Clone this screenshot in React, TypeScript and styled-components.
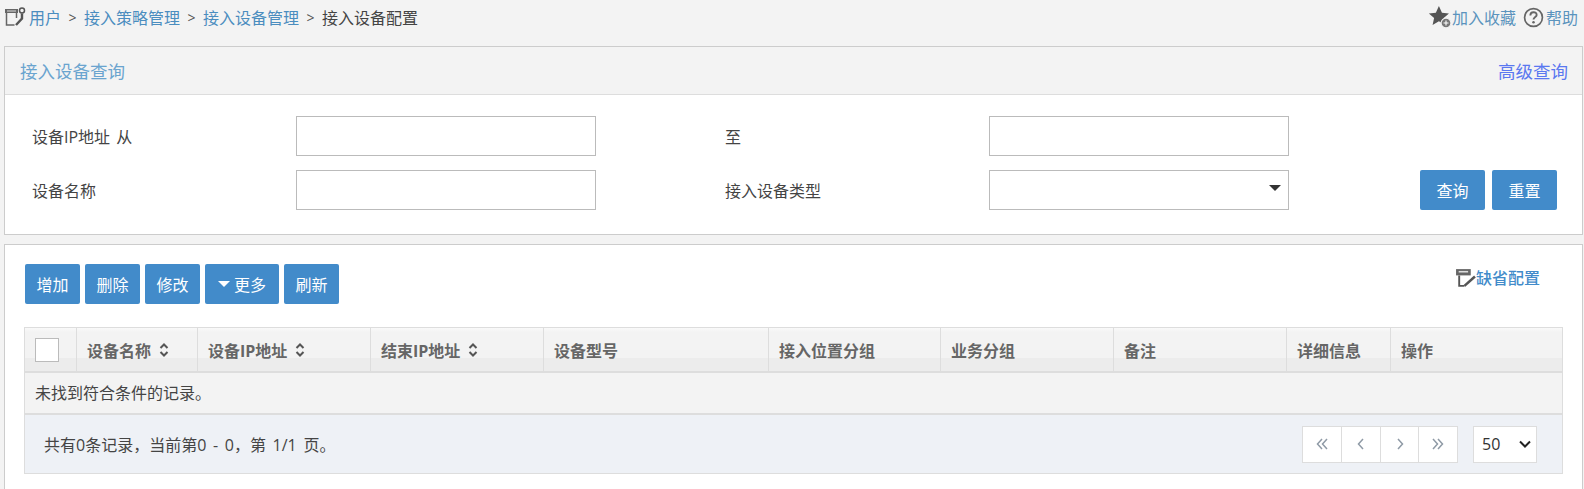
import React from 'react';
import styled, { createGlobalStyle } from 'styled-components';

const GlobalStyle = createGlobalStyle`
   html, body {
      margin: 0;
      padding: 0;
      height: 489px;
      overflow: hidden;
      background: #f3f3f3;
      font-family: "Open Sans", "Noto Sans CJK SC", sans-serif;
      font-size: 16px;
      color: #444;
   }
   * {
      box-sizing: border-box;
   }
`;

const blue = '#428bca';

const TopBar = styled.div`
   height: 46px;
   padding: 0 6px 0 4px;
   display: flex;
   justify-content: space-between;
   align-items: flex-start;
`;

const Crumbs = styled.div`
   display: flex;
   align-items: center;
   height: 34px;
   gap: 7px;
`;

const CrumbIcon = styled.svg`
   width: 22px;
   height: 22px;
   margin-right: -4px;
`;

const CrumbLink = styled.span`
   color: #4b8dbf;
`;

const Sep = styled.span`
   width: 9px;
   text-align: center;
   color: #555;
   font-size: 14px;
`;

const TopActions = styled.div`
   display: flex;
   align-items: center;
   height: 34px;
`;

const TopLink = styled.span`
   color: #5b93bd;
   margin-right: 7px;
   &:last-child {
      margin-right: 0;
   }
`;

const StarIcon = styled.svg`
   width: 24px;
   height: 24px;
`;

const HelpIcon = styled.svg`
   width: 21px;
   height: 21px;
   margin-right: 2px;
`;

const Panel = styled.section`
   margin: 0 1px 0 4px;
   background: #fff;
   border: 1px solid #ccc;
`;

const SearchPanel = styled(Panel)`
   height: 189px;
   margin-bottom: 9px;
`;

const PanelHead = styled.div`
   height: 48px;
   padding: 0 14px 0 15px;
   background: #f3f3f3;
   border-bottom: 1px solid #ddd;
   display: flex;
   justify-content: space-between;
   align-items: center;
   font-size: 17.5px;
`;

const PanelTitle = styled.span`
   color: #6aa4cf;
`;

const AdvancedLink = styled.span`
   color: #5a78f0;
`;

const SearchForm = styled.div`
   display: grid;
   grid-template-columns: 264px 300px 393px 300px 1fr;
   grid-auto-rows: 40px;
   row-gap: 14px;
   padding: 21px 0 0 27px;
   align-items: center;
`;

const FieldLabel = styled.label<{ $indent?: boolean }>`
   color: #444;
   word-spacing: 2px;
   padding-left: ${p => (p.$indent ? '129px' : '0')};
`;

const TextBox = styled.div`
   height: 40px;
   background: #fff;
   border: 1px solid #bbb;
   position: relative;
`;

const Caret = styled.span`
   position: absolute;
   right: 7px;
   top: 14px;
   border-left: 6px solid transparent;
   border-right: 6px solid transparent;
   border-top: 6px solid #333;
`;

const QueryButtons = styled.div`
   display: flex;
   gap: 7px;
   padding-left: 131px;
`;

const Button = styled.button<{ $w: number }>`
   width: ${p => p.$w}px;
   height: 40px;
   padding: 0;
   border: 0;
   border-radius: 2px;
   background: ${blue};
   color: #fff;
   font: inherit;
   display: flex;
   align-items: center;
   justify-content: center;
   gap: 4px;
`;

const ListPanel = styled(Panel)`
   height: 260px;
   padding: 19px 19px 0 19px;
`;

const Toolbar = styled.div`
   height: 40px;
   margin-bottom: 23px;
   padding-left: 1px;
   display: flex;
   gap: 5px;
`;

const DefaultConfig = styled.div`
   margin-left: auto;
   margin-right: 23px;
   margin-top: 1px;
   height: 24px;
   display: flex;
   align-items: center;
   color: ${blue};
   font-weight: 500;
`;

const ConfigIcon = styled.svg`
   width: 21px;
   height: 21px;
`;

const MoreCaret = styled.span`
   border-left: 6px solid transparent;
   border-right: 6px solid transparent;
   border-top: 6px solid #fff;
`;

const Table = styled.div`
   border: 1px solid #ddd;
`;

const HeadRow = styled.div`
   display: grid;
   grid-template-columns: 52px 121px 173px 173px 225px 172px 173px 173px 104px 1fr;
   height: 45px;
   background: linear-gradient(#f9f9f9 0, #f3f3f3 4px, #f3f3f3 30px, #ececec 30px);
   border-bottom: 2px solid #ddd;
`;

const HeadCell = styled.div`
   display: flex;
   align-items: center;
   padding-left: 10px;
   border-right: 1px solid #ddd;
   color: #666;
   font-weight: 700;
   gap: 8px;
   &:last-child {
      border-right: 0;
   }
`;

const CheckBox = styled.div`
   width: 24px;
   height: 24px;
   background: #fff;
   border: 1px solid #bbb;
`;

const SortIcon = styled.svg`
   width: 10px;
   height: 14px;
`;

const EmptyRow = styled.div`
   height: 42px;
   padding: 0 0 2px 10px;
   display: flex;
   align-items: center;
   background: #f3f3f3;
   border-bottom: 2px solid #ddd;
   color: #444;
`;

const Footer = styled.div`
   height: 58px;
   padding: 0 25px 0 19px;
   display: flex;
   align-items: center;
   background: #eef1f6;
`;

const Summary = styled.span`
   color: #444;
   word-spacing: 2.5px;
   margin-right: auto;
`;

const Pager = styled.div`
   display: flex;
   background: #fff;
   border: 1px solid #ddd;
   height: 37px;
   margin-right: 15px;
`;

const PageButton = styled.div<{ $w: number }>`
   width: ${p => p.$w}px;
   display: flex;
   align-items: center;
   justify-content: center;
   border-right: 1px solid #ddd;
   &:last-child {
      border-right: 0;
   }
`;

const PageIcon = styled.svg`
   width: 14px;
   height: 14px;
   fill: none;
   stroke: #8f9aa6;
   stroke-width: 1.5;
`;

const SizeSelect = styled.div`
   width: 64px;
   height: 37px;
   padding: 0 5px 0 8px;
   background: #fff;
   border: 1px solid #ddd;
   display: flex;
   align-items: center;
   justify-content: space-between;
   color: #333;
`;

const ChevronIcon = styled.svg`
   width: 12px;
   height: 8px;
   fill: none;
   stroke: #222;
   stroke-width: 2;
`;

const Sort = () => (
   <SortIcon viewBox="0 0 10 14">
      <path d="M1.5 5 5 1.5 8.5 5M1.5 9 5 12.5 8.5 9" fill="none" stroke="#555" strokeWidth="2" />
   </SortIcon>
);

const columns = [
   { label: '设备名称', sort: true },
   { label: '设备IP地址', sort: true },
   { label: '结束IP地址', sort: true },
   { label: '设备型号' },
   { label: '接入位置分组' },
   { label: '业务分组' },
   { label: '备注' },
   { label: '详细信息' },
   { label: '操作' },
];

const pages = [
   { w: 39, d: 'M7 2 2.5 7 7 12M12 2 7.5 7 12 12' },
   { w: 39, d: 'M9 2 4.5 7 9 12' },
   { w: 38, d: 'M5 2 9.5 7 5 12' },
   { w: 38, d: 'M2 2 6.5 7 2 12M7 2 11.5 7 7 12' },
];

const App = () => {
   return (
      <>
         <GlobalStyle />
         <TopBar>
            <Crumbs>
               <CrumbIcon viewBox="0 0 22 22">
                  <path d="M1 3h13v4H1z" fill="#666" />
                  <path d="M3 5h9" stroke="#ddd" strokeWidth="1" />
                  <path d="M2.500 7v12h8M12.500 7v5" fill="none" stroke="#666" strokeWidth="1.500" />
                  <circle cx="18" cy="4.500" r="2.500" fill="none" stroke="#555" strokeWidth="1.500" />
                  <path d="M18 7.500v5l-6 6.500" fill="none" stroke="#555" strokeWidth="2.400" />
               </CrumbIcon>
               <CrumbLink>用户</CrumbLink>
               <Sep>&gt;</Sep>
               <CrumbLink>接入策略管理</CrumbLink>
               <Sep>&gt;</Sep>
               <CrumbLink>接入设备管理</CrumbLink>
               <Sep>&gt;</Sep>
               <span>接入设备配置</span>
            </Crumbs>
            <TopActions>
               <StarIcon viewBox="0 0 22 22">
                  <path d="M10 1l2.800 6 6.400.7-4.800 4.300 1.400 6.300L10 15l-5.800 3.300 1.400-6.300L.8 7.700 7.200 7z" fill="#555" />
                  <circle cx="16.500" cy="16.500" r="4.500" fill="#777" stroke="#f3f3f3" />
                  <path d="M14.200 16.500h4.600M16.500 14.200v4.600" stroke="#fff" />
               </StarIcon>
               <TopLink>加入收藏</TopLink>
               <HelpIcon viewBox="0 0 20 20">
                  <circle cx="10" cy="10" r="8.500" fill="none" stroke="#666" strokeWidth="1.600" />
                  <path d="M7 8c0-4 6-4 6-.5 0 2-3 2-3 4.500" fill="none" stroke="#666" strokeWidth="1.800" />
                  <circle cx="10" cy="14.500" r="1.200" fill="#666" />
               </HelpIcon>
               <TopLink>帮助</TopLink>
            </TopActions>
         </TopBar>

         <SearchPanel>
            <PanelHead>
               <PanelTitle>接入设备查询</PanelTitle>
               <AdvancedLink>高级查询</AdvancedLink>
            </PanelHead>
            <SearchForm>
               <FieldLabel>设备IP地址 从</FieldLabel>
               <TextBox />
               <FieldLabel $indent>至</FieldLabel>
               <TextBox />
               <span />
               <FieldLabel>设备名称</FieldLabel>
               <TextBox />
               <FieldLabel $indent>接入设备类型</FieldLabel>
               <TextBox>
                  <Caret />
               </TextBox>
               <QueryButtons>
                  <Button $w={65}>查询</Button>
                  <Button $w={65}>重置</Button>
               </QueryButtons>
            </SearchForm>
         </SearchPanel>

         <ListPanel>
            <Toolbar>
               <Button $w={55}>增加</Button>
               <Button $w={55}>删除</Button>
               <Button $w={55}>修改</Button>
               <Button $w={74}>
                  <MoreCaret />
                  更多
               </Button>
               <Button $w={55}>刷新</Button>
               <DefaultConfig>
                  <ConfigIcon viewBox="0 0 20 20">
                     <path d="M1 2h14v6H1z" fill="#666" />
                     <path d="M3.500 4.500h9" stroke="#ddd" strokeWidth="1.500" />
                     <path d="M4 8v10h5" fill="none" stroke="#555" strokeWidth="1.800" />
                     <path d="M19 9l-10 9" fill="none" stroke="#555" strokeWidth="2.400" />
                  </ConfigIcon>
                  缺省配置
               </DefaultConfig>
            </Toolbar>
            <Table>
               <HeadRow>
                  <HeadCell>
                     <CheckBox />
                  </HeadCell>
                  {columns.map(col => (
                     <HeadCell key={col.label}>
                        {col.label}
                        {col.sort && <Sort />}
                     </HeadCell>
                  ))}
               </HeadRow>
               <EmptyRow>未找到符合条件的记录。</EmptyRow>
               <Footer>
                  <Summary>共有0条记录，当前第0 - 0，第 1/1 页。</Summary>
                  <Pager>
                     {pages.map(page => (
                        <PageButton key={page.d} $w={page.w}>
                           <PageIcon viewBox="0 0 14 14">
                              <path d={page.d} />
                           </PageIcon>
                        </PageButton>
                     ))}
                  </Pager>
                  <SizeSelect>
                     50
                     <ChevronIcon viewBox="0 0 12 8">
                        <path d="M1 1.500 6 6.500 11 1.500" />
                     </ChevronIcon>
                  </SizeSelect>
               </Footer>
            </Table>
         </ListPanel>
      </>
   );
};

export default App;
